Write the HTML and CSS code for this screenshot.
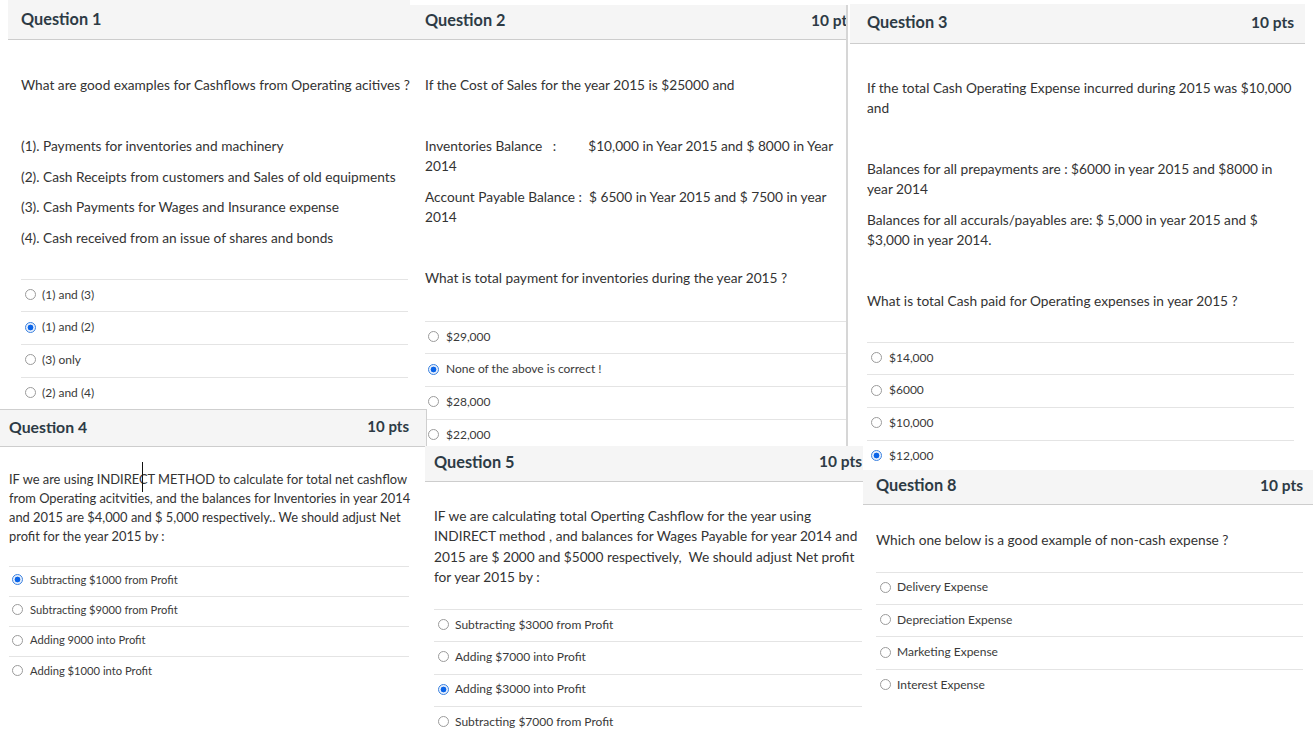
FILE: index.html
```html
<!DOCTYPE html>
<html>
<head>
<meta charset="utf-8">
<link rel="stylesheet" href="styles.css">
</head>
<body>
<div class="canvas">

  <section class="panel q1">
    <header class="qhead"><span class="qtitle">Question 1</span></header>
    <div class="qbody">
      <p>What are good examples for Cashflows from Operating acitives ?</p>
      <p class="blank">&nbsp;</p>
      <p>(1). Payments for inventories and machinery</p>
      <p>(2). Cash Receipts from customers and Sales of old equipments</p>
      <p>(3). Cash Payments for Wages and Insurance expense</p>
      <p>(4). Cash received from an issue of shares and bonds</p>
      <ul class="answers">
        <li><span class="radio"></span>(1) and (3)</li>
        <li><span class="radio on"></span>(1) and (2)</li>
        <li><span class="radio"></span>(3) only</li>
        <li><span class="radio"></span>(2) and (4)</li>
      </ul>
    </div>
  </section>

  <section class="panel q2">
    <header class="qhead"><span class="qtitle">Question 2</span><span class="qpts">10 pts</span></header>
    <div class="qbody">
      <p>If the Cost of Sales for the year 2015 is $25000 and</p>
      <p class="blank">&nbsp;</p>
      <p>Inventories Balance&nbsp;&nbsp; :<span class="tab"></span>$10,000 in Year 2015 and $ 8000 in Year<br>2014</p>
      <p>Account Payable Balance :&nbsp; $ 6500 in Year 2015 and $ 7500 in year<br>2014</p>
      <p class="blank">&nbsp;</p>
      <p>What is total payment for inventories during the year 2015 ?</p>
      <ul class="answers">
        <li><span class="radio"></span>$29,000</li>
        <li><span class="radio on"></span>None of the above is correct !</li>
        <li><span class="radio"></span>$28,000</li>
        <li><span class="radio"></span>$22,000</li>
      </ul>
    </div>
  </section>

  <section class="panel q3">
    <header class="qhead"><span class="qtitle">Question 3</span><span class="qpts">10 pts</span></header>
    <div class="qbody">
      <p>If the total Cash Operating Expense incurred during 2015 was $10,000<br>and</p>
      <p class="blank">&nbsp;</p>
      <p>Balances for all prepayments are : $6000 in year 2015 and $8000 in<br>year 2014</p>
      <p>Balances for all accurals/payables are: $ 5,000 in year 2015 and $<br>$3,000 in year 2014.</p>
      <p class="blank">&nbsp;</p>
      <p>What is total Cash paid for Operating expenses in year 2015 ?</p>
      <ul class="answers">
        <li><span class="radio"></span>$14,000</li>
        <li><span class="radio"></span>$6000</li>
        <li><span class="radio"></span>$10,000</li>
        <li><span class="radio on"></span>$12,000</li>
      </ul>
    </div>
  </section>

  <section class="panel q4">
    <header class="qhead"><span class="qtitle">Question 4</span><span class="qpts">10 pts</span></header>
    <div class="qbody">
      <p>IF we are using INDIRECT METHOD to calculate for total net cashflow<br>from Operating acitvities, and the balances for Inventories in year 2014<br>and 2015 are $4,000 and $ 5,000 respectively.. We should adjust Net<br>profit for the year 2015 by :</p>
      <ul class="answers">
        <li><span class="radio on"></span>Subtracting $1000 from Profit</li>
        <li><span class="radio"></span>Subtracting $9000 from Profit</li>
        <li><span class="radio"></span>Adding 9000 into Profit</li>
        <li><span class="radio"></span>Adding $1000 into Profit</li>
      </ul>
    </div>
  </section>

  <section class="panel q5">
    <header class="qhead"><span class="qtitle">Question 5</span><span class="qpts">10 pts</span></header>
    <div class="qbody">
      <p>IF we are calculating total Operting Cashflow for the year using<br>INDIRECT method , and balances for Wages Payable for year 2014 and<br>2015 are $ 2000 and $5000 respectively,&nbsp; We should adjust Net profit<br>for year 2015 by :</p>
      <ul class="answers">
        <li><span class="radio"></span>Subtracting $3000 from Profit</li>
        <li><span class="radio"></span>Adding $7000 into Profit</li>
        <li><span class="radio on"></span>Adding $3000 into Profit</li>
        <li><span class="radio"></span>Subtracting $7000 from Profit</li>
      </ul>
    </div>
  </section>

  <section class="panel q8">
    <header class="qhead"><span class="qtitle">Question 8</span><span class="qpts">10 pts</span></header>
    <div class="qbody">
      <p>Which one below is a good example of non-cash expense ?</p>
      <ul class="answers">
        <li><span class="radio"></span>Delivery Expense</li>
        <li><span class="radio"></span>Depreciation Expense</li>
        <li><span class="radio"></span>Marketing Expense</li>
        <li><span class="radio"></span>Interest Expense</li>
      </ul>
    </div>
  </section>

  <div class="ibeam"></div>
</div>
</body>
</html>
```

FILE: styles.css
```css
html, body {
  margin: 0;
  padding: 0;
  background: #ffffff;
}

.canvas {
  position: relative;
  width: 1313px;
  height: 737px;
  overflow: hidden;
  font-family: Lato, "Noto Sans", sans-serif;
  background: #ffffff;
}

.panel {
  position: absolute;
  background: #ffffff;
  overflow: hidden;
  box-sizing: border-box;
}

.qhead {
  display: flex;
  justify-content: space-between;
  align-items: center;
  box-sizing: border-box;
  background: #f5f5f5;
  border-bottom: 1px solid #cdcdcd;
  color: #2d3b45;
  font-weight: 700;
  font-size: 16.3px;
  white-space: nowrap;
}

.qpts {
  font-size: 15.5px;
}

.qbody {
  color: #333333;
  font-size: 13.7px;
}

.qbody p {
  margin: 10.5px 0;
  line-height: 20px;
  white-space: nowrap;
}

.tab {
  display: inline-block;
  width: 32px;
}

.answers {
  list-style: none;
  margin: 31px 0 0;
  padding: 0;
}

.answers li {
  display: flex;
  align-items: center;
  border-top: 1px solid #e4e4e4;
  font-size: 12px;
  line-height: 15px;
  padding: 7px 0 9.7px;
  color: #3a3a3a;
  white-space: nowrap;
}

.radio {
  flex: none;
  width: 11px;
  height: 11px;
  box-sizing: border-box;
  border: 1px solid #9b9b9b;
  border-radius: 50%;
  background: #ffffff;
  margin: 1px 6px 0 4px;
}

.radio.on {
  border-color: #3b82e0;
  background: radial-gradient(circle, #0a64e8 0 2.6px, #e8f0fc 3.2px);
}

/* Question 1 */
.q1 {
  left: 8px;
  top: 0;
  width: 402px;
  height: 409px;
}
.q1 .qhead {
  height: 40px;
  padding: 0 13px 2px;
}
.q1 .qbody {
  padding: 24.5px 2px 0 13px;
}

/* Question 2 */
.q2 {
  left: 410px;
  top: 5px;
  width: 438px;
  height: 441px;
  border-right: 2px solid #d6d6d6;
}
.q2 .qhead {
  height: 35px;
  padding: 0 0 5px 15px;
}
.q2 .qpts {
  margin-right: -8px;
}
.q2 .qbody {
  padding: 24.5px 0 0 15px;
}
.q2 .answers {
  margin-top: 33px;
}
.q2 .radio {
  margin-left: 3px;
  margin-right: 7px;
}

/* Question 3 */
.q3 {
  left: 850px;
  top: 4px;
  width: 455px;
  height: 466px;
}
.q3 .qhead {
  height: 40px;
  padding: 0 11px 4px 17px;
}
.q3 .qbody {
  padding: 23.5px 11px 0 17px;
}
.q3 .radio {
  margin-right: 7px;
}

/* Question 4 */
.q4 {
  left: 0;
  top: 409px;
  width: 427px;
  height: 328px;
}
.q4 .qhead {
  height: 38px;
  padding: 0 17px 4px 9px;
  border-top: 1px solid #cfcfcf;
  border-right: 1px solid #cfcfcf;
  font-size: 15.8px;
}
.q4 .qpts {
  font-size: 15px;
}
.q4 .qbody {
  padding: 22.5px 18px 0 9px;
  font-size: 12.9px;
}
.q4 .qbody p {
  margin: 0;
  line-height: 19px;
}
.q4 .answers {
  margin-top: 20px;
}
.q4 .answers li {
  font-size: 11.2px;
  padding: 5.2px 0 9.1px;
}
.q4 .radio {
  margin-left: 3px;
  margin-right: 7px;
}

/* Question 5 */
.q5 {
  left: 425px;
  top: 446px;
  width: 438px;
  height: 291px;
}
.q5 .qhead {
  height: 36px;
  padding: 0 1px 5px 9px;
}
.q5 .qbody {
  padding: 24px 1px 0 9px;
  font-size: 13.7px;
}
.q5 .qbody p {
  margin: 0;
  line-height: 20.3px;
}
.q5 .answers {
  margin-top: 22px;
}
.q5 .answers li {
  font-size: 12px;
  padding: 6.5px 0 9.8px;
}

/* Question 8 */
.q8 {
  left: 863px;
  top: 470px;
  width: 450px;
  height: 267px;
}
.q8 .qhead {
  height: 35px;
  padding: 0 10px 5px 13px;
}
.q8 .qbody {
  padding: 25px 10px 0 13px;
}
.q8 .qbody p {
  margin: 0;
}
.q8 .answers {
  margin-top: 21.5px;
}
.q8 .answers li {
  padding: 6.8px 0 9.7px;
}

/* text cursor overlay */
.ibeam {
  position: absolute;
  left: 142px;
  top: 462px;
  width: 1px;
  height: 30px;
  background: #111111;
}
```
